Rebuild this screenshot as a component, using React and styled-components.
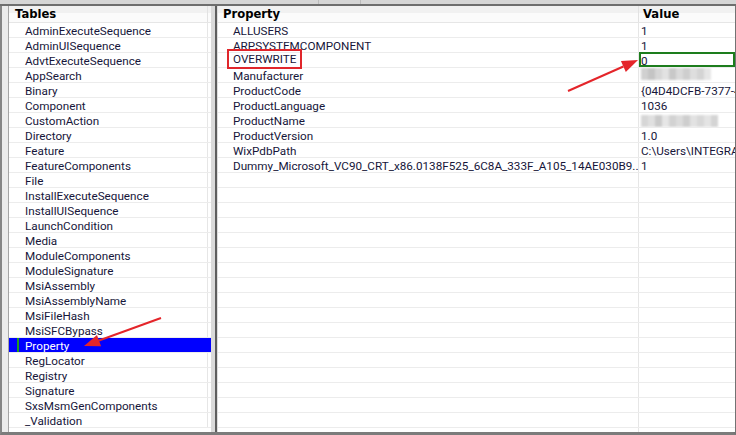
import { createGlobalStyle, styled, css } from "styled-components";

const GlobalStyle = createGlobalStyle`
    body {
        margin: 0;
        background: #ffffff;
        font-family: Roboto, "Liberation Sans", sans-serif;
    }
`;

const tables = [
    "AdminExecuteSequence",
    "AdminUISequence",
    "AdvtExecuteSequence",
    "AppSearch",
    "Binary",
    "Component",
    "CustomAction",
    "Directory",
    "Feature",
    "FeatureComponents",
    "File",
    "InstallExecuteSequence",
    "InstallUISequence",
    "LaunchCondition",
    "Media",
    "ModuleComponents",
    "ModuleSignature",
    "MsiAssembly",
    "MsiAssemblyName",
    "MsiFileHash",
    "MsiSFCBypass",
    "Property",
    "RegLocator",
    "Registry",
    "Signature",
    "SxsMsmGenComponents",
    "_Validation",
];

const properties = [
    { name: "ALLUSERS", value: "1" },
    { name: "ARPSYSTEMCOMPONENT", value: "1" },
    { name: "OVERWRITE", value: "0", marked: true },
    { name: "Manufacturer", blur: [208, 196, 214, 226, 200, 218, 206, 222, 212, 230] },
    { name: "ProductCode", value: "{04D4DCFB-7377-4A5E-9C1D-2B7F0E1A33C4}" },
    { name: "ProductLanguage", value: "1036" },
    { name: "ProductName", blur: [214, 224, 202, 230, 210, 220, 206, 226, 216, 228, 212] },
    { name: "ProductVersion", value: "1.0" },
    { name: "WixPdbPath", value: "C:\\Users\\INTEGRATION\\Desktop\\Setup.wixpdb" },
    {
        name: "Dummy_Microsoft_VC90_CRT_x86.0138F525_6C8A_333F_A105_14AE030B9...",
        value: "1",
    },
];

const TEXT = "#16163a";
const ROW_H = 15;

const Window = styled.div`
    width: 736px;
    height: 435px;
    display: flex;
    flex-direction: column;
    position: relative;
    overflow: hidden;
    background: #d4d4d4;
`;

const TopStrip = styled.div`
    height: 4px;
    display: flex;
    background: #d6d6d6;
    border-bottom: 2px solid #6e6e6e;
`;

const StripGap = styled.div`
    width: ${(p) => p.$w}px;
    border-right: 1px solid #bcbcbc;
`;

const Body = styled.div`
    flex: 1;
    min-height: 0;
    display: flex;
    background: #ebebeb;
    border-left: 2px solid #858585;
    border-right: 3px solid #737373;
    border-bottom: 3px solid #7b7b7b;
    padding-left: 6px;
`;

const Panel = styled.div`
    width: ${(p) => p.$w}px;
    flex-shrink: 0;
    display: flex;
    flex-direction: column;
    background: #ffffff;
    border-left: 1px solid ${(p) => p.$edge};
    overflow: hidden;
`;

const Splitter = styled.div`
    width: 4px;
    flex-shrink: 0;
    background: #dadada;
    border-right: 2px solid #5e5e5e;
`;

const HeaderRow = styled.div`
    height: 17px;
    flex-shrink: 0;
    display: flex;
    background: linear-gradient(#f1f1f1 0 45%, #fbfbfb 45% 100%);
    border-bottom: 1px solid #e6e6e6;
    box-sizing: border-box;
`;

const HeaderCell = styled.div`
    width: ${(p) => (p.$w ? `${p.$w}px` : "auto")};
    flex: ${(p) => (p.$w ? "none" : "1")};
    box-sizing: border-box;
    padding-left: ${(p) => p.$pad}px;
    border-right: ${(p) => (p.$divider ? "1px solid #e2e2e2" : "none")};
    font-family: "DejaVu Sans", Verdana, sans-serif;
    font-weight: bold;
    font-size: 11.6px;
    line-height: 16px;
    color: #000000;
    white-space: nowrap;
    overflow: hidden;
`;

const Row = styled.div`
    height: ${ROW_H}px;
    flex-shrink: 0;
    display: flex;
    box-sizing: border-box;
    border-bottom: 1px solid #ececec;
    background: ${(p) => (p.$selected ? "#0000ff" : "transparent")};
`;

const Cell = styled.div`
    width: ${(p) => (p.$w ? `${p.$w}px` : "auto")};
    flex: ${(p) => (p.$w ? "none" : "1")};
    min-width: 0;
    box-sizing: border-box;
    display: flex;
    align-items: center;
    padding-left: ${(p) => p.$pad}px;
    padding-top: 2px;
    border-right: ${(p) => (p.$divider ? "1px solid #e6e6e6" : "none")};
    font-size: 11.7px;
    line-height: 12px;
    color: ${(p) => (p.$selected ? "#ffffff" : TEXT)};
    white-space: nowrap;
    overflow: ${(p) => (p.$open ? "visible" : "hidden")};
    ${(p) =>
        p.$focused &&
        css`
            box-shadow: inset 0 0 0 2px #1d7d1d;
            margin-top: -1px;
            height: ${ROW_H}px;
        `}
`;

const Marker = styled.span`
    width: 2px;
    align-self: stretch;
    flex-shrink: 0;
    margin: -2px 6px 0 0;
    background: ${(p) => (p.$on ? "#1f9a1f" : "transparent")};
`;

const Label = styled.span`
    display: inline-block;
    ${(p) =>
        p.$marked &&
        css`
            margin-left: -3px;
            padding: 1px 3px;
            outline: 2px solid #e0262b;
            outline-offset: 1px;
            position: relative;
            top: -2px;
        `}
`;

const Blur = styled.div`
    display: flex;
    height: 12px;
    margin-top: ${(p) => p.$dy}px;
    filter: blur(0.9px);
`;

const Pixel = styled.span`
    width: 7px;
    height: 100%;
    background: rgb(${(p) => p.$s}, ${(p) => p.$s}, ${(p) => p.$s});
`;

const Overlay = styled.svg`
    position: absolute;
    left: 0;
    top: 0;
    pointer-events: none;
`;

function Arrow({ x1, y1, x2, y2 }) {
    const dx = x2 - x1;
    const dy = y2 - y1;
    const len = Math.hypot(dx, dy);
    const ux = dx / len;
    const uy = dy / len;
    const bx = x2 - ux * 16;
    const by = y2 - uy * 16;
    const px = -uy * 6;
    const py = ux * 6;
    return (
        <g>
            <line x1={x1} y1={y1} x2={bx} y2={by} stroke="#e4252a" strokeWidth="2" />
            <polygon
                points={`${x2},${y2} ${bx + px},${by + py} ${bx - px},${by - py}`}
                fill="#e4252a"
            />
        </g>
    );
}

export default function App() {
    const emptyRows = Array.from({ length: 20 });

    return (
        <>
            <GlobalStyle />
            <Window>
                <TopStrip>
                    <StripGap $w={318} />
                    <StripGap $w={41} />
                </TopStrip>
                <Body>
                    <Panel $w={202} $edge="#a4a4a4">
                        <HeaderRow>
                            <HeaderCell $w={199} $pad={6} $divider>
                                Tables
                            </HeaderCell>
                        </HeaderRow>
                        {tables.map((t) => {
                            const selected = t === "Property";
                            return (
                                <Row key={t} $selected={selected}>
                                    <Cell $w={199} $pad={8} $divider={!selected} $selected={selected}>
                                        <Marker $on={selected} />
                                        {t}
                                    </Cell>
                                </Row>
                            );
                        })}
                    </Panel>
                    <Splitter />
                    <Panel $w={517} $edge="#dedede">
                        <HeaderRow>
                            <HeaderCell $w={421} $pad={5} $divider>
                                Property
                            </HeaderCell>
                            <HeaderCell $pad={4}>Value</HeaderCell>
                        </HeaderRow>
                        {properties.map((p) => (
                            <Row key={p.name}>
                                <Cell $w={421} $pad={15} $divider $open={p.marked}>
                                    <Label $marked={p.marked}>{p.name}</Label>
                                </Cell>
                                <Cell $pad={2} $focused={p.marked}>
                                    {p.blur ? (
                                        <Blur $dy={p.name === "ProductName" ? 0 : -4}>
                                            {p.blur.map((s, i) => (
                                                <Pixel key={i} $s={s} />
                                            ))}
                                        </Blur>
                                    ) : (
                                        p.value
                                    )}
                                </Cell>
                            </Row>
                        ))}
                        {emptyRows.map((_, i) => (
                            <Row key={i}>
                                <Cell $w={421} $pad={15} $divider />
                                <Cell $pad={2} />
                            </Row>
                        ))}
                    </Panel>
                </Body>
                <Overlay width="736" height="435" viewBox="0 0 736 435">
                    <Arrow x1={568} y1={91} x2={638} y2={60} />
                    <Arrow x1={161} y1={318} x2={84} y2={346} />
                </Overlay>
            </Window>
        </>
    );
}
